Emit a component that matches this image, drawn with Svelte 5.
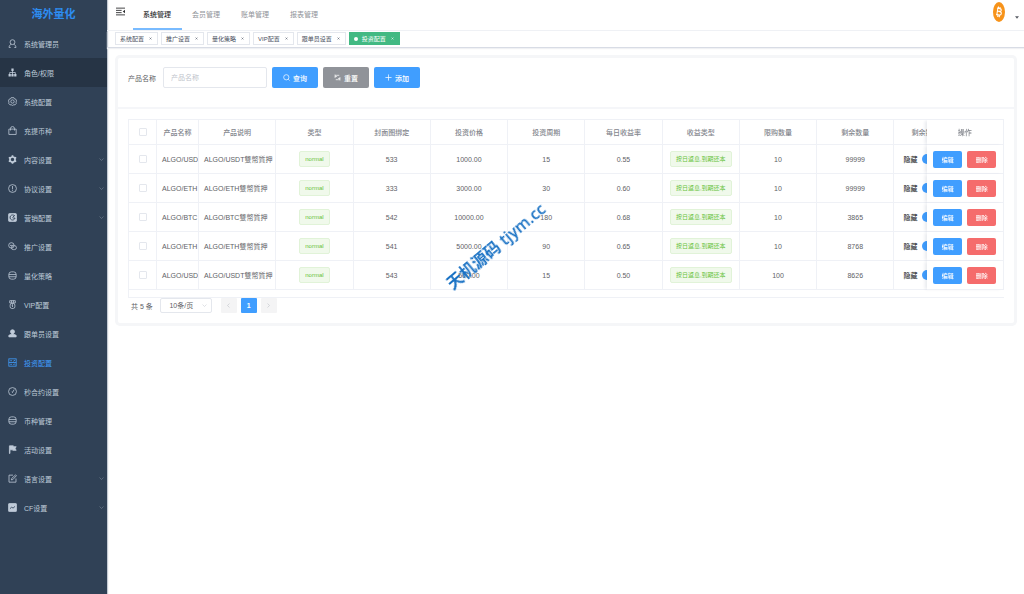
<script lang="ts">
  interface MenuItem {
    label: string;
    icon: string;
    children?: boolean;
  }

  // 16x16 outlines, drawn with currentColor
  const icons: Record<string, string> = {
    user: '<circle cx="8" cy="5.6" r="4.3"/><path d="M1.800 15c.3-3.200 2-5.100 4-5.500M14.200 15c-.3-3.200-2-5.100-4-5.500M1.800 15h3M11.200 15h3"/>',
    tree: '<path fill="currentColor" stroke="none" d="M6 1h4v4.500H6zM1 10.500h4V15H1zM6 10.500h4V15H6zM11 10.500h4V15h-4z"/><path d="M8 5v6M3 11V8h10v3"/>',
    setting: '<path d="M5.500 1.200h5l.8 2 2.200.3 1.800 3.500L14 9l1 2-2.500 3-2-.3L8 15l-2.500-1.300-2 .3L1 11l1-2-1.300-2 1.800-3.500 2.200-.3z"/><circle cx="8" cy="8" r="3"/>',
    bag: '<path d="M1.500 5.500h13V15h-13zM4.500 8V4.500a3.500 3.500 0 0 1 7 0V8"/>',
    gear: '<circle cx="8" cy="8" r="4.500" stroke-width="3"/><path stroke-width="3" d="M8 .5v3M8 12.500v3M1.500 4.200l2.500 1.500M12 10.300l2.500 1.500M1.500 11.800L4 10.300M12 5.700l2.500-1.500"/>',
    warn: '<circle cx="8" cy="8" r="7"/><path d="M8 3.500v6M8 11v1.800"/>',
    promo: '<rect x="1" y="1" width="14" height="14" rx="1.500" fill="currentColor"/><path stroke="#304156" stroke-width="1.600" d="M11.500 5A4.500 4.500 0 1 0 12.500 9H8.500M8 8l4-4"/>',
    share: '<circle cx="6" cy="6" r="4.800"/><rect x="6" y="6.500" width="9" height="7" rx="3.500"/><path d="M3.500 6h5"/>',
    coin: '<rect x="1.500" y="1.500" width="13" height="13" rx="4.500"/><path d="M1.500 6.300h13M1.500 10.200h13"/>',
    medal: '<path d="M3 1.200h10v4H3zM6.300 1v4M9.700 1v4"/><rect x="3.800" y="6" width="8.400" height="9" rx="3"/><path d="M8 8v4.500M6.500 9L8 8"/>',
    person: '<path fill="currentColor" d="M8 1.200a3.600 3.600 0 0 1 2 6.600v1.400l4.500 2V14h-13v-2.800l4.500-2V7.800a3.600 3.600 0 0 1 2-6.600z"/>',
    invest: '<rect x="1.500" y="1.500" width="13" height="13"/><path d="M1.500 8h13M4 4.800h3M9.500 5.800l3-2M4 11.300h3M9.500 12l1.500-1.500 2 1.500"/>',
    time: '<circle cx="8" cy="8" r="7"/><path d="M11 4.500L8 9.500M6.800 8.500l2 1.500"/>',
    flag: '<path fill="currentColor" d="M2.500 1.500h7v1.500h5l-1.800 3 1.800 3.500H8.500V8.500h-5V15h-1z"/>',
    edit: '<path d="M9 2H1.800v12.500h12.400V8M6 10.500l.5-2.500L13.500 1.500l1.500 1.500-6.500 7z"/>',
    chart: '<rect x="1" y="1" width="14" height="14" rx="1" fill="currentColor"/><path stroke="#304156" stroke-width="1.500" d="M3.500 10l3-2.500 2.500 1.500L12.500 6"/>',
  };

  const menu: MenuItem[] = [
    { label: '系统管理员', icon: 'user' },
    { label: '角色/权限', icon: 'tree' },
    { label: '系统配置', icon: 'setting' },
    { label: '充提币种', icon: 'bag' },
    { label: '内容设置', icon: 'gear', children: true },
    { label: '协议设置', icon: 'warn', children: true },
    { label: '营销配置', icon: 'promo', children: true },
    { label: '推广设置', icon: 'share' },
    { label: '量化策略', icon: 'coin' },
    { label: 'VIP配置', icon: 'medal' },
    { label: '跟单员设置', icon: 'person' },
    { label: '投资配置', icon: 'invest' },
    { label: '秒合约设置', icon: 'time' },
    { label: '币种管理', icon: 'coin' },
    { label: '活动设置', icon: 'flag' },
    { label: '语言设置', icon: 'edit', children: true },
    { label: 'CF设置', icon: 'chart', children: true },
  ];
  const hovered = '角色/权限';
  const current = '投资配置';

  const topNav = ['系统管理', '会员管理', '账单管理', '报表管理'];
  const openTabs = ['系统配置', '推广设置', '量化策略', 'VIP配置', '跟单员设置', '投资配置'];

  const columns = ['类型', '封面图绑定', '投资价格', '投资周期', '每日收益率', '收益类型', '限购数量', '剩余数量'];

  const rows = [
    { name: 'ALGO/USDT', cover: 533, price: '1000.00', days: 15, rate: '0.55', limit: 10, left: 99999 },
    { name: 'ALGO/ETH', cover: 333, price: '3000.00', days: 30, rate: '0.60', limit: 10, left: 99999 },
    { name: 'ALGO/BTC', cover: 542, price: '10000.00', days: 180, rate: '0.68', limit: 10, left: 3865 },
    { name: 'ALGO/ETH', cover: 541, price: '5000.00', days: 90, rate: '0.65', limit: 10, left: 8768 },
    { name: 'ALGO/USDT', cover: 543, price: '500.00', days: 15, rate: '0.50', limit: 100, left: 8626 },
  ];

  let keyword = $state('');
  let pageSize = $state('10');
  let activeNav = $state('系统管理');
</script>

<div class="app">
  <aside class="sidebar">
    <h1 class="logo">海外量化</h1>
    <nav class="menu">
      {#each menu as item}
        <a
          href="#menu"
          class="menu-item"
          class:hovered={item.label === hovered}
          class:active={item.label === current}
        >
          <svg class="icon" viewBox="0 0 16 16">{@html icons[item.icon]}</svg>
          <span class="menu-label">{item.label}</span>
          {#if item.children}
            <svg class="arrow" viewBox="0 0 10 10"><path d="M1 3l4 4 4-4" /></svg>
          {/if}
        </a>
      {/each}
    </nav>
  </aside>

  <div class="main">
    <header class="navbar">
      <button class="hamburger" aria-label="收起菜单">
        <svg viewBox="0 0 16 16">
          <path d="M0 2h16M0 6h10M0 10h10M0 14h16" />
          <path class="solid" d="M16 5v6l-4-3z" />
        </svg>
      </button>
      <nav class="top-nav">
        {#each topNav as label}
          <a href="#nav" class:active={label === activeNav} onclick={() => (activeNav = label)}>{label}</a>
        {/each}
      </nav>
      <button class="avatar" aria-label="账户">
        <svg class="coin" viewBox="0 0 12 20">
          <ellipse cx="6" cy="10" rx="6" ry="10" fill="#f7931a" />
          <path
            d="M4 6l3 .6c2 .5 1.500 3-.3 2.800L4.500 9M4.500 9l2.500.6c2.200.6 1.500 3.600-.6 3.400L3.200 12.600M4.900 6L3.800 13M5.500 4.500v2M7 5v1.800M4.800 13v2M6.300 13.300v2"
            fill="none"
            stroke="#fff"
            stroke-width="1.100"
          />
        </svg>
        <svg class="caret" viewBox="0 0 6 4"><path d="M0 0h6L3 4z" /></svg>
      </button>
    </header>

    <div class="tabs">
      {#each openTabs as tab}
        <a href="#tab" class="tab" class:active={tab === current}>
          {#if tab === current}<span class="dot"></span>{/if}
          {tab}
          <svg viewBox="0 0 6 6"><path d="M1 1l4 4M5 1L1 5" /></svg>
        </a>
      {/each}
    </div>

    <main class="card">
      <form class="search" onsubmit={(e) => e.preventDefault()}>
        <label for="product">产品名称</label>
        <input id="product" type="text" placeholder="产品名称" bind:value={keyword} />
        <button type="submit" class="btn primary">
          <svg viewBox="0 0 16 16"><circle cx="7.500" cy="7.500" r="6" /><path d="M12 12l3 3" /></svg>
          查询
        </button>
        <button type="reset" class="btn info">
          <svg viewBox="0 0 16 16">
            <path d="M2.500 9V6a3 3 0 0 1 3-3H12M2.500 1v4.500H7M13.500 7v3a3 3 0 0 1-3 3H4M13.500 15v-4.500H9" />
          </svg>
          重置
        </button>
        <button type="button" class="btn primary">
          <svg viewBox="0 0 16 16"><path d="M8 1v14M1 8h14" /></svg>
          添加
        </button>
      </form>

      <div class="content">
        <div class="table-wrap">
          <table>
            <colgroup>
              <col class="col-check" />
              <col class="col-name" />
            </colgroup>
            <thead>
              <tr>
                <th><input type="checkbox" aria-label="全选" /></th>
                <th>产品名称</th>
                <th>产品说明</th>
                {#each columns as column}
                  <th>{column}</th>
                {/each}
                <th class="state">剩余数</th>
                <th class="fixed">操作</th>
              </tr>
            </thead>
            <tbody>
              {#each rows as row}
                <tr>
                  <td><input type="checkbox" aria-label="选择" /></td>
                  <td class="text">{row.name}</td>
                  <td class="text">{row.name}雙幣質押</td>
                  <td><span class="tag">normal</span></td>
                  <td>{row.cover}</td>
                  <td>{row.price}</td>
                  <td>{row.days}</td>
                  <td>{row.rate}</td>
                  <td><span class="tag">按日返息,到期还本</span></td>
                  <td>{row.limit}</td>
                  <td>{row.left}</td>
                  <td>
                    <label class="switch">
                      <span>隐藏</span>
                      <input type="checkbox" role="switch" checked />
                    </label>
                  </td>
                  <td class="fixed">
                    <div class="actions">
                      <button class="btn small primary">编辑</button>
                      <button class="btn small danger">删除</button>
                    </div>
                  </td>
                </tr>
              {/each}
            </tbody>
          </table>
        </div>

        <div class="pagination">
          <span class="total">共 5 条</span>
          <div class="size">
            <select aria-label="每页条数" bind:value={pageSize}>
              <option value="10">10条/页</option>
              <option value="20">20条/页</option>
            </select>
            <svg viewBox="0 0 10 10"><path d="M1 3l4 4 4-4" /></svg>
          </div>
          <button class="page" disabled aria-label="上一页">
            <svg viewBox="0 0 10 10"><path d="M7 1L3 5l4 4" /></svg>
          </button>
          <button class="page current">1</button>
          <button class="page" disabled aria-label="下一页">
            <svg viewBox="0 0 10 10"><path d="M3 1l4 4-4 4" /></svg>
          </button>
        </div>
      </div>
    </main>
  </div>

  <div class="watermark">天机源码 tjym.cc</div>
</div>

<style>
  :global(body) {
    background: #fff;
  }
  .app {
    position: relative;
    display: flex;
    min-height: 100vh;
    overflow: hidden;
    font-family: 'Liberation Sans', 'Noto Sans CJK SC', sans-serif;
    font-size: 7px;
    color: #606266;
  }
  .app * {
    box-sizing: border-box;
  }
  a {
    color: inherit;
    text-decoration: none;
  }
  button,
  input,
  select {
    margin: 0;
    padding: 0;
    border: 0;
    font: inherit;
    color: inherit;
    background: none;
  }
  svg {
    flex-shrink: 0;
    fill: none;
    stroke: currentColor;
  }

  .sidebar {
    flex: 0 0 107px;
    background: #304156;
    box-shadow: 1px 0 1px #c3cad3;
  }
  .logo {
    margin: 0;
    height: 29px;
    line-height: 28px;
    font-size: 11px;
    text-align: center;
    color: #2d8cf0;
  }
  .menu-item {
    display: flex;
    align-items: center;
    gap: 7px;
    height: 29px;
    padding: 0 3px 0 8px;
    color: #bfcbd9;
  }
  .menu-item.hovered {
    background: #263445;
  }
  .menu-item.active {
    color: #409eff;
  }
  .menu-label {
    flex: 1;
  }
  .icon {
    width: 9px;
    height: 9px;
    stroke-width: 1.4;
  }
  .arrow {
    width: 5px;
    height: 5px;
    color: #8592a3;
  }

  .main {
    flex: 1;
    min-width: 0;
  }
  .navbar {
    display: flex;
    height: 31px;
    padding: 0 5px 0 9px;
    border-bottom: 1px solid #eff1f5;
  }
  .hamburger {
    height: 23px;
    margin-right: 8px;
    color: #303133;
  }
  .hamburger svg {
    display: block;
    width: 9px;
    height: 9px;
    stroke-width: 1.6;
  }
  .solid {
    fill: currentColor;
    stroke: none;
  }
  .top-nav {
    display: flex;
    flex: 1;
  }
  .top-nav a {
    height: 30px;
    padding: 0 11px 0 10px;
    line-height: 29px;
    color: #909399;
    border-bottom: 2px solid transparent;
  }
  .top-nav a.active {
    color: #303133;
    font-weight: 500;
    border-color: #79bbff;
  }
  .avatar {
    display: flex;
    gap: 10px;
    align-items: center;
    height: 24px;
  }
  .coin {
    width: 12px;
    height: 20px;
    stroke: none;
  }
  .caret {
    width: 4px;
    height: 3px;
    margin-top: 10px;
    fill: #5a5e66;
    stroke: none;
  }

  .tabs {
    display: flex;
    gap: 3px;
    height: 17px;
    padding: 1px 8px;
    border-bottom: 1px solid #d8dce5;
    box-shadow: 0 1px 1px #f0f1f4;
  }
  .tab {
    display: flex;
    align-items: center;
    gap: 4px;
    height: 13px;
    padding: 0 4px;
    font-size: 6px;
    color: #495060;
    border: 1px solid #e4e7ed;
  }
  .tab.active {
    color: #fff;
    background: #42b983;
    border-color: #42b983;
  }
  .tab svg {
    width: 5px;
    height: 3px;
  }
  .dot {
    width: 4px;
    height: 4px;
    border-radius: 50%;
    background: #fff;
  }

  .card {
    margin: 10px 10px 10px 11px;
    border-radius: 2px;
    background: #fff;
    box-shadow: 0 0 0 3px #f5f6f8;
  }
  .search {
    display: flex;
    align-items: center;
    gap: 5px;
    padding: 9px 10px 19px;
    border-bottom: 2px solid #f5f6f9;
  }
  .search label {
    margin-right: 2px;
  }
  .search input {
    width: 104px;
    height: 21px;
    padding: 0 7px;
    border: 1px solid #e4e7ed;
    border-radius: 2px;
  }
  .search input::placeholder {
    color: #c0c4cc;
  }
  .btn {
    display: flex;
    align-items: center;
    justify-content: center;
    gap: 3px;
    width: 46px;
    height: 21px;
    border-radius: 2px;
    font-weight: 500;
    color: #fff;
  }
  .btn svg {
    width: 7px;
    height: 7px;
    stroke-width: 1.6;
  }
  .btn.primary {
    background: #409eff;
  }
  .btn.info {
    background: #909399;
  }
  .btn.danger {
    background: #f56c6c;
  }
  .btn.small {
    width: 29px;
    height: 17px;
    font-size: 6px;
  }

  .content {
    padding: 10px;
  }
  .table-wrap {
    overflow: hidden;
    padding-bottom: 7px;
    border: 1px solid #eff1f6;
    border-right: 0;
  }
  table {
    width: calc(100% + 45px);
    table-layout: fixed;
    border-collapse: separate;
    border-spacing: 0;
  }
  .col-check {
    width: 28px;
  }
  .col-name {
    width: 42px;
  }
  th,
  td {
    height: 29px;
    padding: 0;
    overflow: hidden;
    white-space: nowrap;
    text-align: center;
    border-right: 1px solid #eff1f6;
    border-bottom: 1px solid #eff1f6;
  }
  th {
    height: 25px;
    font-weight: 500;
    color: #82858c;
  }
  th.state {
    padding-left: 17px;
    text-align: left;
  }
  td.text {
    padding-left: 5px;
    text-align: left;
  }
  .fixed {
    position: sticky;
    right: 0;
    overflow: visible;
    background: #fff;
    box-shadow: -3px 0 3px -1px rgba(30, 50, 90, 0.1);
  }
  th input,
  td > input {
    display: block;
    width: 8px;
    height: 8px;
    margin: 0 auto;
    appearance: none;
    border: 1px solid #e4e7ed;
    border-radius: 1px;
  }
  .tag {
    display: inline-block;
    height: 16px;
    padding: 0 5px;
    line-height: 14px;
    font-size: 6px;
    color: #67c23a;
    background: #f0f9eb;
    border: 1px solid #e1f3d8;
    border-radius: 2px;
    vertical-align: middle;
  }
  .switch {
    display: flex;
    align-items: center;
    gap: 5px;
    padding-left: 9px;
    font-weight: 500;
    color: #303133;
  }
  .switch input {
    width: 20px;
    height: 10px;
    appearance: none;
    border-radius: 5px;
    background: #409eff;
  }
  .actions {
    display: flex;
    justify-content: center;
    gap: 5px;
  }

  .pagination {
    display: flex;
    align-items: center;
    gap: 4px;
    padding: 0 3px;
  }
  .total {
    margin-right: 3px;
  }
  .size {
    display: flex;
    align-items: center;
    width: 52px;
    height: 15px;
    margin-right: 5px;
    padding-right: 4px;
    border: 1px solid #e4e7ed;
    border-radius: 2px;
  }
  .size select {
    flex: 1;
    appearance: none;
    text-align: center;
  }
  .size svg {
    width: 5px;
    height: 5px;
    color: #c0c4cc;
  }
  .page {
    display: flex;
    align-items: center;
    justify-content: center;
    width: 16px;
    height: 15px;
    border-radius: 1px;
    background: #f4f4f5;
    color: #b4b8bf;
  }
  .page svg {
    width: 5px;
    height: 5px;
  }
  .page.current {
    font-weight: 700;
    color: #fff;
    background: #409eff;
  }

  .watermark {
    position: absolute;
    top: 246px;
    left: 496px;
    font-family: 'Open Sans', 'Noto Sans CJK SC', sans-serif;
    font-size: 16px;
    font-weight: 600;
    line-height: 20px;
    white-space: nowrap;
    color: #1a72c4;
    transform: translate(-50%, -50%) rotate(-40deg);
    pointer-events: none;
  }
</style>
